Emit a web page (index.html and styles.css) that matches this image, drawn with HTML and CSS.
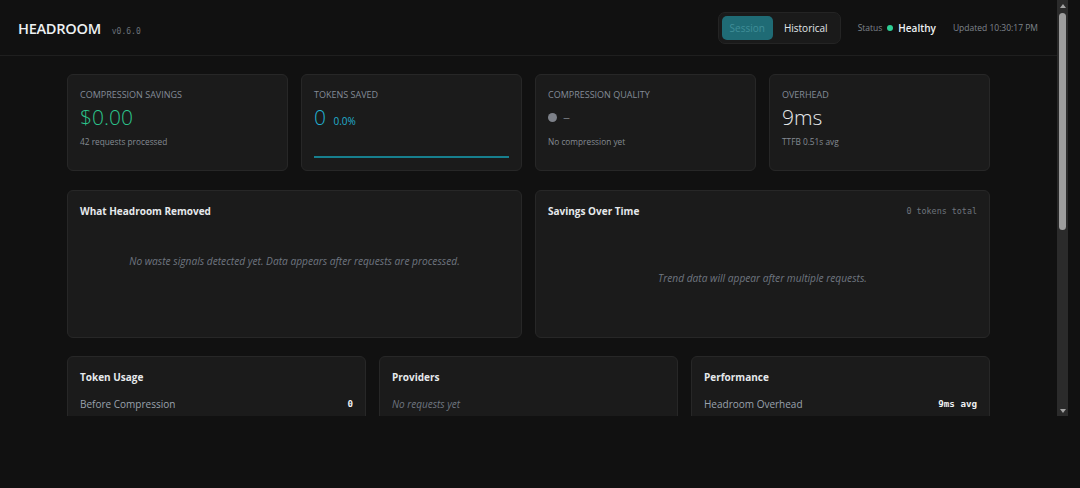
FILE: index.html
```html
<!DOCTYPE html>
<html lang="en">
<head>
    <meta charset="UTF-8">
    <meta name="viewport" content="width=device-width, initial-scale=1.0">
    <title>Headroom Dashboard</title>
    <link rel="stylesheet" href="styles.css">
</head>
<body>
    <div class="window">
        <div class="app">
            <header class="topbar">
                <div class="brand">
                    <span class="logo">HEADROOM</span>
                    <span class="version">v0.6.0</span>
                </div>
                <div class="topbar-right">
                    <div class="toggle">
                        <button class="toggle-btn active">Session</button>
                        <button class="toggle-btn">Historical</button>
                    </div>
                    <div class="status">
                        <span class="status-label">Status</span>
                        <span class="dot"></span>
                        <span class="status-value">Healthy</span>
                    </div>
                    <div class="updated">Updated 10:30:17 PM</div>
                </div>
            </header>

            <main class="main">
                <div class="stats">
                    <div class="card">
                        <div class="card-label">Compression Savings</div>
                        <div class="card-value green">$0.00</div>
                        <div class="card-sub">42 requests processed</div>
                    </div>
                    <div class="card">
                        <div class="card-label">Tokens Saved</div>
                        <div class="card-value cyan">0 <span class="pct">0.0%</span></div>
                        <div class="spark"></div>
                    </div>
                    <div class="card">
                        <div class="card-label">Compression Quality</div>
                        <div class="card-value quality"><span class="grey-dot"></span> –</div>
                        <div class="card-sub">No compression yet</div>
                    </div>
                    <div class="card">
                        <div class="card-label">Overhead</div>
                        <div class="card-value">9ms</div>
                        <div class="card-sub">TTFB 0.51s avg</div>
                    </div>
                </div>

                <div class="row two">
                    <section class="panel">
                        <div class="panel-head">
                            <h3>What Headroom Removed</h3>
                        </div>
                        <p class="empty waste">No waste signals detected yet. Data appears after requests are processed.</p>
                    </section>
                    <section class="panel">
                        <div class="panel-head">
                            <h3>Savings Over Time</h3>
                            <span class="mono-note">0 tokens total</span>
                        </div>
                        <p class="empty trend">Trend data will appear after multiple requests.</p>
                    </section>
                </div>

                <div class="row three">
                    <section class="panel">
                        <div class="panel-head"><h3>Token Usage</h3></div>
                        <div class="kv"><span>Before Compression</span><span class="num">0</span></div>
                    </section>
                    <section class="panel">
                        <div class="panel-head"><h3>Providers</h3></div>
                        <div class="kv"><span class="muted">No requests yet</span></div>
                    </section>
                    <section class="panel">
                        <div class="panel-head"><h3>Performance</h3></div>
                        <div class="kv"><span>Headroom Overhead</span><span class="num">9ms avg</span></div>
                    </section>
                </div>
            </main>
        </div>

        <div class="scrollbar">
            <span class="arrow up"></span>
            <div class="thumb"></div>
            <span class="arrow down"></span>
        </div>
    </div>
</body>
</html>
```

FILE: styles.css
```css
body {
    margin: 0;
    background: #111111;
    font-family: 'Open Sans', 'Noto Sans', sans-serif;
    color: #e4e7ea;
}
.window {
    display: flex;
    width: 1068px;
    height: 416px;
}
.app {
    flex: 1;
    overflow: hidden;
}

/* fake scrollbar */
.scrollbar {
    width: 11px;
    background: #2b2b2b;
    display: flex;
    flex-direction: column;
    align-items: center;
    padding: 4px 0 3px;
    box-sizing: border-box;
}
.arrow {
    width: 0;
    height: 0;
    border-left: 3.5px solid transparent;
    border-right: 3.5px solid transparent;
}
.arrow.up {
    border-bottom: 4px solid #a3a3a3;
}
.arrow.down {
    margin-top: auto;
    border-top: 4px solid #a3a3a3;
}
.thumb {
    margin-top: 5px;
    width: 7px;
    height: 217px;
    border-radius: 4px;
    background: #9d9d9d;
}

/* header */
.topbar {
    height: 55px;
    display: flex;
    align-items: center;
    justify-content: space-between;
    padding: 0 19px 0 18px;
    border-bottom: 1px solid #1f1f1f;
}
.brand {
    display: flex;
    align-items: baseline;
    gap: 11px;
}
.logo {
    font-size: 14.6px;
    font-weight: 600;
    letter-spacing: -0.3px;
    color: #eef1f3;
}
.version {
    font-family: 'DejaVu Sans Mono', monospace;
    font-size: 8px;
    color: #6c727a;
}
.topbar-right {
    display: flex;
    align-items: center;
    gap: 17px;
}
.toggle {
    display: flex;
    gap: 2px;
    padding: 3px;
    background: #1a1a1a;
    border: 1px solid #242424;
    border-radius: 7px;
}
.toggle-btn {
    font-family: inherit;
    font-size: 10px;
    border: none;
    border-radius: 5px;
    background: transparent;
    color: #e1e6ea;
    padding: 0 9px;
    height: 24px;
}
.toggle-btn.active {
    background: #1f6b75;
    color: #3f8e98;
    padding: 0 8px;
}
.status {
    display: flex;
    align-items: center;
    gap: 5px;
}
.status-label {
    font-size: 8.5px;
    color: #7f858d;
}
.dot {
    width: 6px;
    height: 6px;
    border-radius: 50%;
    background: #2ecf95;
}
.status-value {
    font-size: 10px;
    font-weight: 600;
    color: #eef1f3;
}
.updated {
    font-size: 8.5px;
    color: #7f858d;
}

/* main */
.main {
    max-width: 923px;
    margin: 0 auto;
    padding: 18px 0;
}
.stats {
    display: grid;
    grid-template-columns: repeat(4, 1fr);
    gap: 13px;
    margin-bottom: 19px;
}
.card {
    background: #1b1b1b;
    border: 1px solid #272727;
    border-radius: 6px;
    padding: 13px 12px 12px;
    min-height: 97px;
    box-sizing: border-box;
    display: flex;
    flex-direction: column;
}
.card-label {
    font-size: 9px;
    line-height: 14px;
    text-transform: uppercase;
    color: #838b97;
}
.card-value {
    font-size: 21px;
    font-weight: 300;
    line-height: 30px;
    color: #e8eaec;
}
.card-value.green { color: #2cc48c; }
.card-value.cyan { color: #22b0d0; }
.pct {
    font-size: 10px;
    font-weight: 400;
    margin-left: 2px;
}
.quality {
    display: flex;
    align-items: center;
    gap: 6px;
    height: 30px;
    color: #8b9097;
    font-size: 14px;
}
.grey-dot {
    width: 9px;
    height: 9px;
    border-radius: 50%;
    background: #7d8189;
}
.card-sub {
    font-size: 8.3px;
    line-height: 14px;
    margin-top: 3px;
    color: #858b93;
}
.spark {
    margin-top: auto;
    height: 2px;
    background: #177f8e;
}

/* panels */
.row {
    display: grid;
    gap: 13px;
    margin-bottom: 18px;
}
.row.two { grid-template-columns: 1fr 1fr; }
.row.three { grid-template-columns: repeat(3, 1fr); }
.panel {
    background: #1b1b1b;
    border: 1px solid #272727;
    border-radius: 6px;
    padding: 13px 12px;
    box-sizing: border-box;
}
.row.two .panel {
    height: 148px;
}
.panel-head {
    display: flex;
    justify-content: space-between;
    align-items: center;
}
.panel h3 {
    margin: 0;
    font-size: 10px;
    line-height: 14px;
    font-weight: 700;
    color: #e6e9ec;
}
.mono-note {
    font-family: 'DejaVu Sans Mono', monospace;
    font-size: 8.4px;
    color: #6e747c;
}
.empty {
    margin: 0;
    text-align: center;
    font-style: italic;
    font-size: 10.2px;
    line-height: 14px;
    color: #6f7680;
}
.empty.waste { margin-top: 36px; }
.empty.trend { margin-top: 53px; }
.kv {
    display: flex;
    justify-content: space-between;
    align-items: center;
    font-size: 10px;
    line-height: 14px;
    color: #9aa2ad;
    margin-top: 13px;
}
.kv .num {
    font-family: 'DejaVu Sans Mono', monospace;
    font-size: 9.2px;
    font-weight: 700;
    color: #eef0f2;
}
.kv .muted {
    font-style: italic;
    color: #6f7680;
}
```
